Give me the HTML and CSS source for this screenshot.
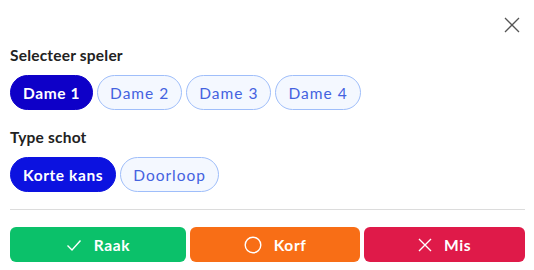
FILE: index.html
```html
<!DOCTYPE html>
<html lang="nl">
<head>
    <meta charset="UTF-8">
    <meta name="viewport" content="width=device-width, initial-scale=1.0">
    <title>Schot registreren</title>
    <link rel="stylesheet" href="styles.css">
</head>
<body>

<div class="modal">
    <div class="modal-top">
        <button class="close-btn" aria-label="Sluiten">
            <svg width="16" height="16" viewBox="0 0 16 16">
                <path d="M1 1 L15 15 M15 1 L1 15" stroke="#555" stroke-width="1.3" fill="none"/>
            </svg>
        </button>
    </div>

    <div class="section-label">Selecteer speler</div>
    <div class="chip-row">
        <button class="chip active">Dame 1</button>
        <button class="chip">Dame 2</button>
        <button class="chip">Dame 3</button>
        <button class="chip">Dame 4</button>
    </div>

    <div class="section-label">Type schot</div>
    <div class="chip-row">
        <button class="chip active bright">Korte kans</button>
        <button class="chip">Doorloop</button>
    </div>

    <div class="divider"></div>

    <div class="action-row">
        <button class="action raak">
            <svg width="16" height="16" viewBox="0 0 16 16">
                <path d="M1.5 8.5 L6 13 L14.5 3.5" stroke="#fff" stroke-width="1.4" fill="none"/>
            </svg>
            Raak
        </button>
        <button class="action korf">
            <svg width="18" height="18" viewBox="0 0 18 18">
                <circle cx="9" cy="9" r="7.8" stroke="#fff" stroke-width="1.4" fill="none"/>
            </svg>
            Korf
        </button>
        <button class="action mis">
            <svg width="14" height="14" viewBox="0 0 14 14">
                <path d="M1 1 L13 13 M13 1 L1 13" stroke="#fff" stroke-width="1.4" fill="none"/>
            </svg>
            Mis
        </button>
    </div>
</div>

</body>
</html>
```

FILE: styles.css
```css
body {
    font-family: Lato, "Noto Sans", sans-serif;
    background-color: #fff;
    margin: 0;
    padding: 0;
}
button {
    font-family: inherit;
    cursor: pointer;
}
.modal {
    padding: 13px 9px 0 10px;
}
.modal-top {
    display: flex;
    justify-content: flex-end;
    height: 24px;
    margin-bottom: 8px;
}
.close-btn {
    width: 24px;
    height: 24px;
    padding: 0;
    border: none;
    background: none;
    display: flex;
    align-items: center;
    justify-content: center;
    margin-right: 1px;
}
.section-label {
    font-size: 15.5px;
    font-weight: bold;
    color: #222;
    line-height: 20px;
    letter-spacing: 0.2px;
    margin-bottom: 10px;
}
.chip-row {
    display: flex;
    gap: 4px;
    margin-bottom: 17px;
}
.chip {
    height: 35px;
    padding: 0 12px;
    border: 1px solid #9fbefa;
    border-radius: 18px;
    background-color: #f4f8ff;
    color: #4462df;
    font-size: 15.5px;
    letter-spacing: 1px;
}
.chip.active {
    background-color: #0e00c8;
    border-color: #0e00c8;
    color: #fff;
    font-weight: bold;
    letter-spacing: 0.6px;
}
.chip.active.bright {
    background-color: #0c12e0;
    border-color: #0c12e0;
}
.chip-row + .divider {
    margin-top: 1px;
}
.divider {
    height: 1px;
    background-color: #dcdcdc;
    margin-bottom: 17px;
}
.action-row {
    display: flex;
    gap: 4px;
}
.action {
    flex: 1 1 auto;
    height: 35px;
    border: none;
    border-radius: 6px;
    color: #fff;
    font-size: 15.5px;
    font-weight: bold;
    letter-spacing: 0.6px;
    display: flex;
    align-items: center;
    justify-content: center;
    gap: 12px;
}
.raak {
    background-color: #0bc16a;
    padding: 0 8px;
}
.korf {
    background-color: #f86e16;
}
.mis {
    background-color: #df1a49;
}
```
